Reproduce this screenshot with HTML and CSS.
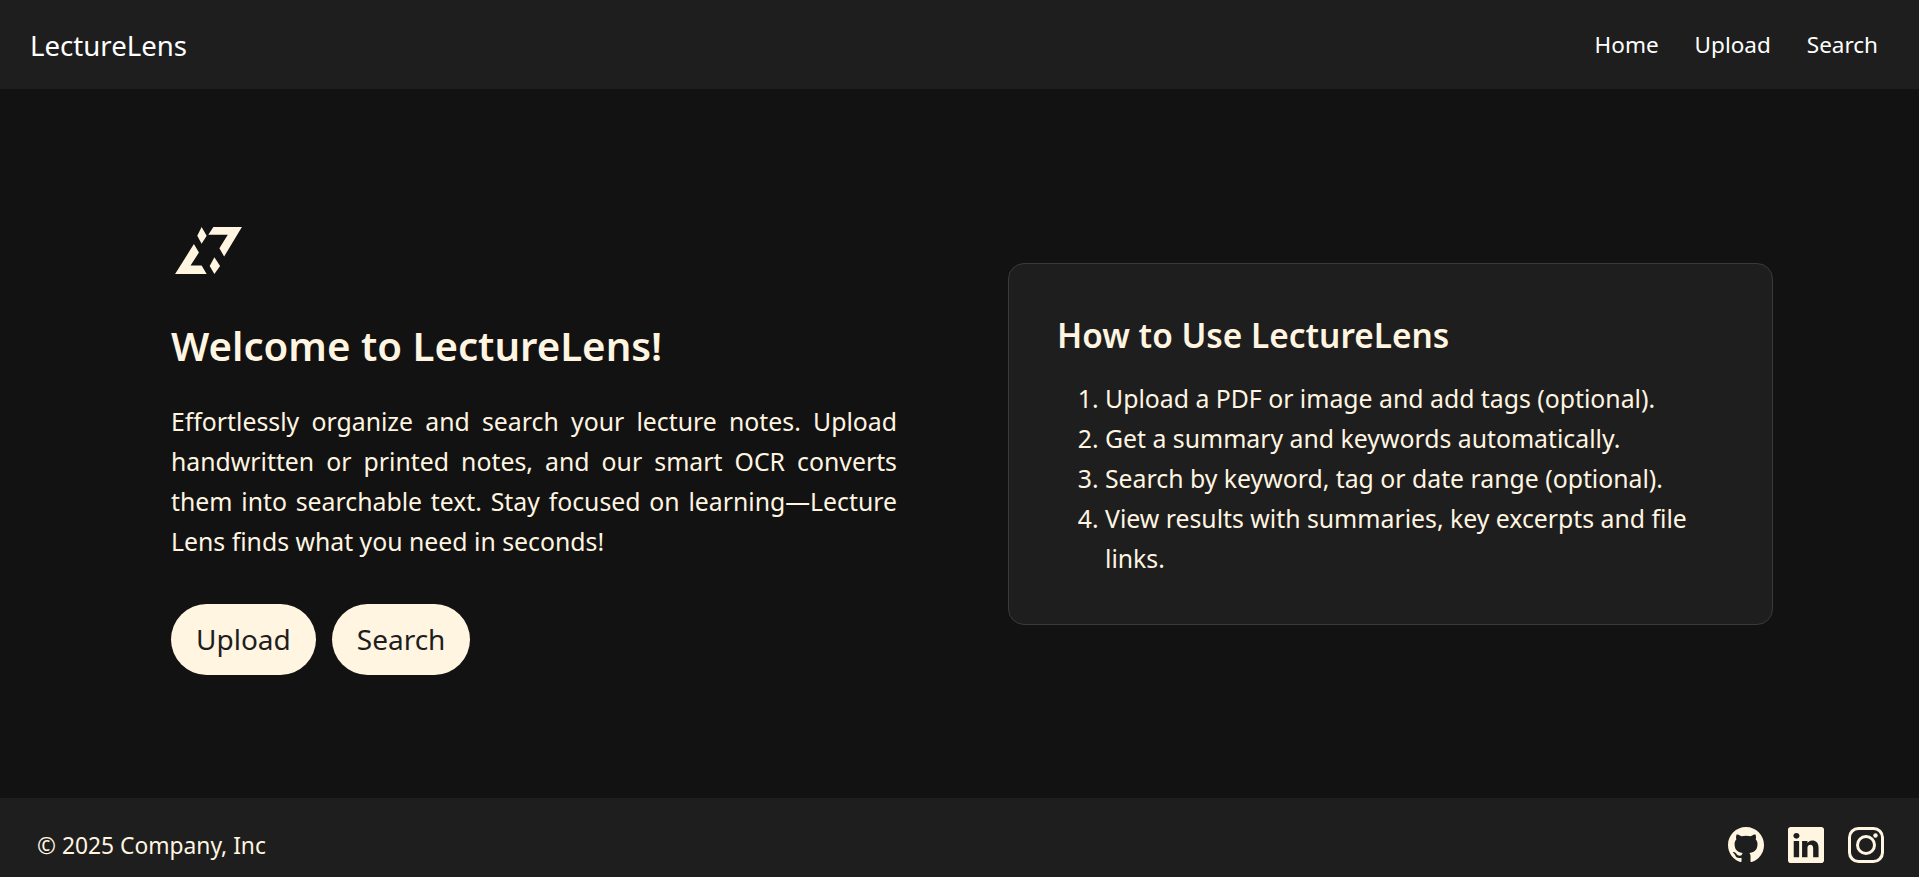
FILE: index.html
```html
<!DOCTYPE html>
<html lang="en">
<head>
    <meta charset="UTF-8">
    <meta name="viewport" content="width=device-width, initial-scale=1.0">
    <title>LectureLens</title>
    <link rel="stylesheet" href="styles.css">
</head>
<body>
    <nav class="navbar">
        <a class="brand" href="#">LectureLens</a>
        <div class="nav-links">
            <a href="#">Home</a>
            <a href="#">Upload</a>
            <a href="#">Search</a>
        </div>
    </nav>

    <main class="hero">
        <section class="intro">
            <svg class="logo" viewBox="76 82 199 140" aria-hidden="true">
                <polygon points="190,82 275,82 222,170 208,145 233,105 175,105"/>
                <polygon points="132,133 147,158 122,197 155,197 170,222 76,222"/>
                <polygon points="155,82 170,108 155,132 142,108"/>
                <polygon points="193,172 210,198 193,222 179,198"/>
            </svg>
            <h1>Welcome to LectureLens!</h1>
            <p>Effortlessly organize and search your lecture notes. Upload handwritten or printed notes, and our smart OCR converts them into searchable text. Stay focused on learning—Lecture Lens finds what you need in seconds!</p>
            <div class="actions">
                <a class="pill" href="#">Upload</a>
                <a class="pill" href="#">Search</a>
            </div>
        </section>

        <section class="howto">
            <h2>How to Use LectureLens</h2>
            <ol>
                <li>Upload a PDF or image and add tags (optional).</li>
                <li>Get a summary and keywords automatically.</li>
                <li>Search by keyword, tag or date range (optional).</li>
                <li>View results with summaries, key excerpts and file links.</li>
            </ol>
        </section>
    </main>

    <footer class="footer">
        <span class="copyright">© 2025 Company, Inc</span>
        <div class="socials">
            <a href="#" aria-label="GitHub">
                <svg viewBox="0 0 16 16"><path d="M8 0C3.58 0 0 3.58 0 8c0 3.54 2.29 6.53 5.47 7.59.4.07.55-.17.55-.38 0-.19-.01-.82-.01-1.49-2.01.37-2.53-.49-2.69-.94-.09-.23-.48-.94-.82-1.13-.28-.15-.68-.52-.01-.53.63-.01 1.08.58 1.23.82.72 1.21 1.87.87 2.33.66.07-.52.28-.87.51-1.07-1.78-.2-3.64-.89-3.64-3.95 0-.87.31-1.59.82-2.15-.08-.2-.36-1.02.08-2.12 0 0 .67-.21 2.2.82.64-.18 1.32-.27 2-.27.68 0 1.36.09 2 .27 1.53-1.04 2.2-.82 2.2-.82.44 1.1.16 1.92.08 2.12.51.56.82 1.27.82 2.15 0 3.07-1.87 3.75-3.65 3.95.29.25.54.73.54 1.48 0 1.07-.01 1.93-.01 2.2 0 .21.15.46.55.38A8.013 8.013 0 0016 8c0-4.42-3.58-8-8-8z"/></svg>
            </a>
            <a href="#" aria-label="LinkedIn">
                <svg viewBox="0 0 16 16"><path d="M0 1.146C0 .513.526 0 1.175 0h13.65C15.474 0 16 .513 16 1.146v13.708c0 .633-.526 1.146-1.175 1.146H1.175C.526 16 0 15.487 0 14.854V1.146zm4.943 12.248V6.169H2.542v7.225h2.401zm-1.2-8.212c.837 0 1.358-.554 1.358-1.248-.015-.709-.52-1.248-1.342-1.248-.822 0-1.359.54-1.359 1.248 0 .694.521 1.248 1.327 1.248h.016zm4.908 8.212V9.359c0-.216.016-.432.08-.586.173-.431.568-.878 1.232-.878.869 0 1.216.662 1.216 1.634v3.865h2.401V9.25c0-2.22-1.184-3.252-2.764-3.252-1.274 0-1.845.7-2.165 1.193v.025h-.016a5.54 5.54 0 0 1 .016-.025V6.169h-2.4c.03.678 0 7.225 0 7.225h2.4z"/></svg>
            </a>
            <a href="#" aria-label="Instagram">
                <svg viewBox="0 0 36 36">
                    <rect class="line" x="1.5" y="1.5" width="33" height="33" rx="9"/>
                    <circle class="line" cx="18" cy="18" r="8.5"/>
                    <circle cx="27.5" cy="8.5" r="2.2"/>
                </svg>
            </a>
        </div>
    </footer>
</body>
</html>
```

FILE: styles.css
```css
* {
    box-sizing: border-box;
}
html, body {
    height: 100%;
}
body {
    margin: 0;
    display: flex;
    flex-direction: column;
    background-color: #121212;
    color: #fff5e1;
    font-family: "Noto Sans", Arial, sans-serif;
    font-size: 24.8px;
    line-height: 40px;
}
a {
    color: inherit;
    text-decoration: none;
}
.navbar {
    height: 89px;
    padding: 0 41px 0 30px;
    display: flex;
    align-items: center;
    justify-content: space-between;
    background-color: #1e1e1e;
    color: #fff;
}
.brand {
    font-size: 27.6px;
}
.nav-links {
    display: flex;
    gap: 36px;
    font-size: 22.5px;
}
.hero {
    flex: 1;
    padding: 0 146px 0 171px;
    display: flex;
    align-items: center;
    gap: 111px;
}
.intro {
    flex: 0 0 726px;
    padding-top: 14px;
}
.logo {
    display: block;
    width: 67px;
    height: 47px;
    margin: 0 0 0 4px;
    fill: #fff5e1;
}
h1 {
    margin: 48px 0 31px;
    font-size: 40.2px;
    line-height: 48px;
    font-weight: 600;
}
.intro p {
    margin: 0 0 43px;
    text-align: justify;
}
.actions {
    display: flex;
    gap: 16px;
}
.pill {
    height: 71px;
    padding: 0 25px;
    display: flex;
    align-items: center;
    border-radius: 36px;
    background-color: #fff5e1;
    color: #1e1e1e;
    font-size: 28px;
}
.howto {
    flex: 1;
    padding: 50px 48px 46px;
    border: 1px solid #3a3a3a;
    border-radius: 16px;
    background-color: #1e1e1e;
}
h2 {
    margin: 0 0 22px;
    font-size: 33.4px;
    line-height: 42px;
    font-weight: 600;
}
ol {
    margin: 0;
    padding-left: 48px;
}
.footer {
    height: 79px;
    padding: 14px 35px 0 37px;
    display: flex;
    align-items: center;
    justify-content: space-between;
    background-color: #1e1e1e;
    font-size: 22.8px;
}
.copyright {
    padding-top: 3px;
}
.socials {
    display: flex;
    gap: 24px;
}
.socials a {
    display: flex;
}
.socials svg {
    width: 36px;
    height: 36px;
    fill: #fff5e1;
}
.socials .line {
    fill: none;
    stroke: #fff5e1;
    stroke-width: 3;
}
```
